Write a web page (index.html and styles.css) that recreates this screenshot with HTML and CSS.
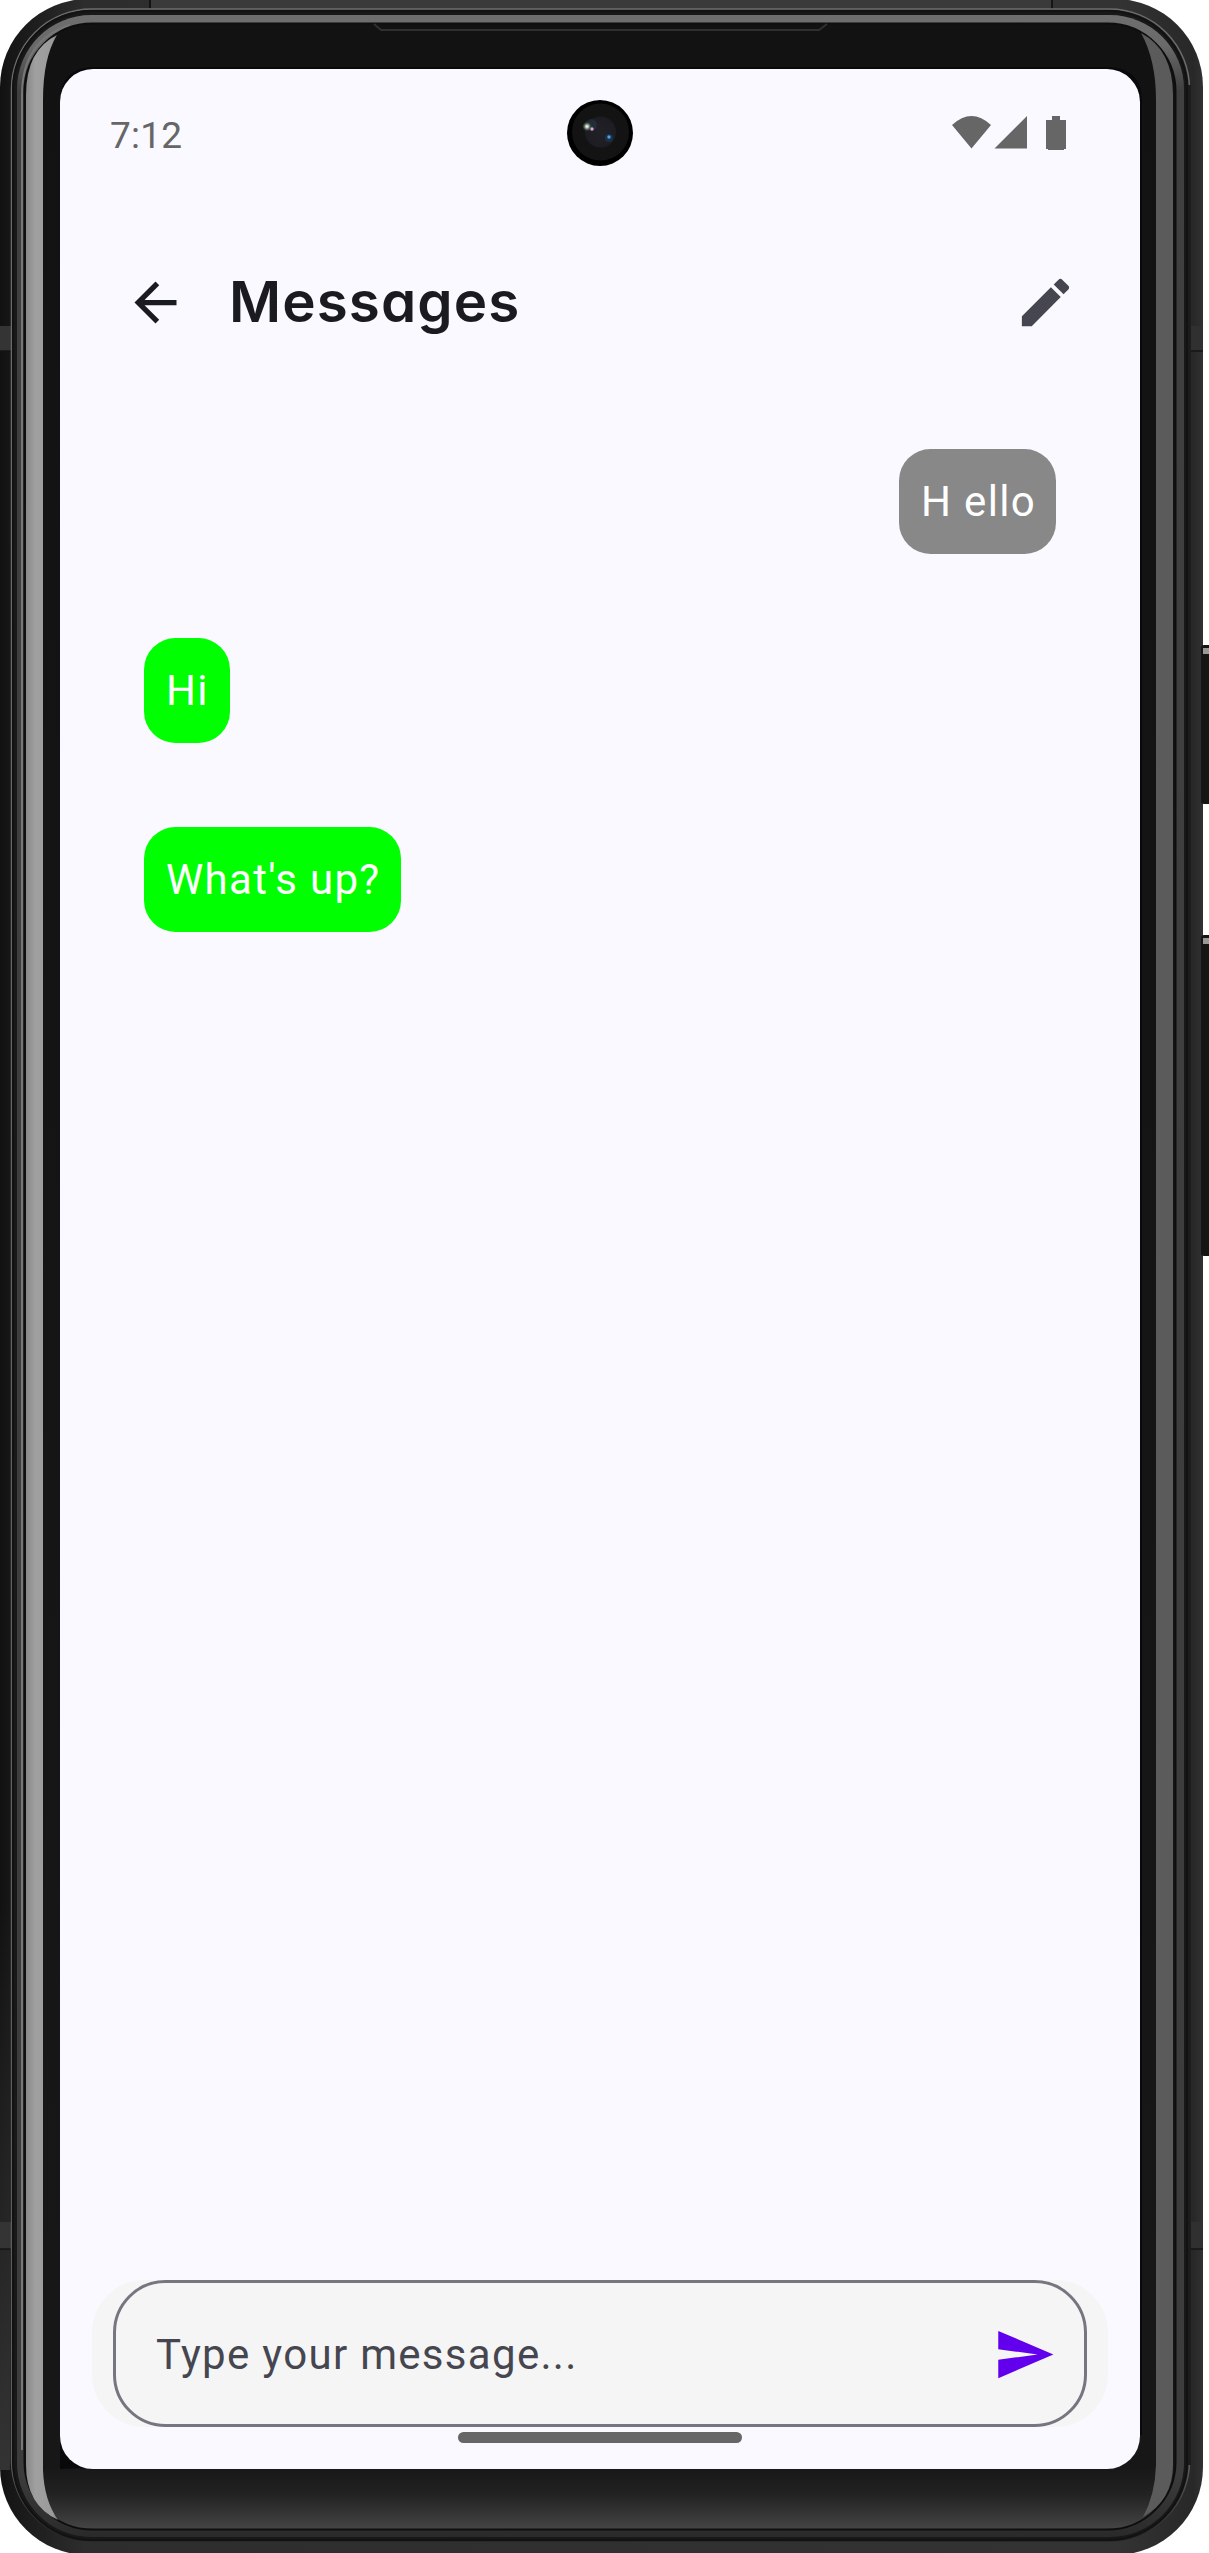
FILE: index.html
```html
<!DOCTYPE html>
<html lang="en">
<head>
<meta charset="utf-8">
<title>Messages</title>
<link rel="stylesheet" href="styles.css">
</head>
<body>
<div class="device">
  <svg class="frame" viewBox="0 0 1209 2553" aria-hidden="true">
    <defs>
      <linearGradient id="side" x1="0" x2="1" y1="0" y2="0">
        <stop offset="0" stop-color="#111"/><stop offset=".008" stop-color="#161616"/>
        <stop offset=".07" stop-color="#2d2d2d"/><stop offset=".93" stop-color="#333"/>
        <stop offset=".992" stop-color="#282828"/><stop offset="1" stop-color="#303030"/>
      </linearGradient>
      <linearGradient id="ring" x1="0" x2="0" y1="0" y2="1">
        <stop offset="0" stop-color="#6e6e6e"/><stop offset=".012" stop-color="#6a6a6a"/>
        <stop offset=".03" stop-color="#404040"/><stop offset=".975" stop-color="#3c3c3c"/>
        <stop offset="1" stop-color="#2a2a2a"/>
      </linearGradient>
      <linearGradient id="rim" x1="0" x2="0" y1="0" y2="1">
        <stop offset="0" stop-color="#6c6c6c"/><stop offset=".97" stop-color="#5c5c5c"/>
        <stop offset="1" stop-color="#262626"/>
      </linearGradient>
      <linearGradient id="glass" x1="0" x2="0" y1="0" y2="1">
        <stop offset="0" stop-color="#121212"/><stop offset=".975" stop-color="#171717"/>
        <stop offset=".986" stop-color="#222"/><stop offset="1" stop-color="#454545"/>
      </linearGradient>
      <linearGradient id="foot" x1="0" x2="0" y1="0" y2="1">
        <stop offset="0" stop-color="#333" stop-opacity="0"/><stop offset="1" stop-color="#333"/>
      </linearGradient>
      <linearGradient id="glintL" x1="0" x2="1" y1="0" y2="0">
        <stop offset="0" stop-color="#888"/><stop offset=".3" stop-color="#a0a0a0"/>
        <stop offset=".85" stop-color="#9a9a9a"/><stop offset="1" stop-color="#707070"/>
      </linearGradient>
      <radialGradient id="lens"><stop offset="0" stop-color="#222027"/><stop offset="1" stop-color="#1c1d22"/></radialGradient>
      <radialGradient id="glow"><stop offset="0" stop-color="#fff"/><stop offset=".3" stop-color="#b8c8b0"/><stop offset="1" stop-color="#304038" stop-opacity="0"/></radialGradient>
    </defs>
    <rect x="0" y="-1" width="1203" height="2556" rx="88" fill="url(#side)"/>
    <path d="M0 1900H10V2470H0Z" fill="url(#foot)"/>
    <path d="M151 0H1052V10H151Z" fill="#3a3a3a"/>
    <path d="M150 0V8M1052 0V10" stroke="#0b0b0b" stroke-width="1.5"/>
    <path d="M0 326H11V351H0ZM0 2222H11V2249H0Z" fill="#343434"/>
    <path d="M1189 326H1203V351H1189ZM1189 2222H1203V2249H1189Z" fill="#303030"/>
    <path d="M0 351H11M1189 351H1203M0 2249H11M1189 2249H1203" stroke="#151515" stroke-width="1.500"/>
    <rect x="1201" y="645" width="10" height="159" rx="3" fill="#151515"/>
    <rect x="1203" y="648" width="6" height="6" fill="#999"/>
    <rect x="1201" y="935" width="10" height="321" rx="3" fill="#151515"/>
    <rect x="1203" y="938" width="6" height="6" fill="#999"/>
    <rect x="11.5" y="9" width="1178" height="2532" rx="80" fill="#202020" stroke="url(#rim)" stroke-width="1.5"/>
    <path d="M1189.500 85V2465" stroke="#1c1c1c" stroke-width="3"/>
    <rect x="13" y="11" width="1174" height="2529" rx="78" fill="#181818" stroke="#121212" stroke-width="2"/>
    <rect x="17" y="15" width="1167" height="2522" rx="74" fill="url(#ring)"/>
    <path d="M22 2450V95Q22 40 70 25" fill="none" stroke="#777" stroke-width="2"/>
    <rect x="24.5" y="23.5" width="1151" height="2506" rx="68" fill="url(#glass)" stroke="#0e0e0e" stroke-width="2"/>
    <path d="M26 95Q26 50 57 35Q43 58 43 100V2470Q44 2500 58 2520Q26 2505 26 2465Z" fill="url(#glintL)"/>
    <path d="M1141 33Q1173 50 1173 95V2465Q1173 2500 1143 2517Q1155 2495 1156 2465V100Q1156 60 1141 33Z" fill="#5b5b5b"/>
    <path d="M374 24L381 30H819L827 24" fill="none" stroke="#303030" stroke-width="2"/>
    <path d="M60 2469V102Q60 67 95 67H1107Q1142 67 1142 102V2435" fill="#09090b"/>
  </svg>
  <main class="screen">
    <header class="status">
      <span class="clock">7:12</span>
      <svg class="status-icons" viewBox="0 0 116 36" aria-hidden="true">
        <path d="M0 9Q19.500-9 39 9L19.500 32.500ZM42.500 32.500L75 0V32.500Z"/>
        <path d="M94 4H100V0H108V4H114V33H112V34H96V33H94Z"/>
      </svg>
      <svg class="camera" viewBox="0 0 66 66" aria-hidden="true">
        <circle cx="33" cy="33" r="33" fill="#000"/><circle cx="33.500" cy="32" r="28.500" fill="#131313"/>
        <circle cx="33.500" cy="32" r="15.500" fill="url(#lens)"/>
        <circle cx="24" cy="25" r="6" fill="#294b5d" opacity=".35"/>
        <circle cx="20" cy="26.500" r="5" fill="url(#glow)"/><circle cx="25" cy="29" r="1.700" fill="#d9a5c9"/>
        <circle cx="42" cy="38" r="4" fill="#164569" opacity=".5"/><circle cx="42" cy="37" r="1.700" fill="#4aa2e8"/>
      </svg>
    </header>
    <div class="toolbar">
      <svg class="icon back" viewBox="0 0 24 24"><path d="M20 11H7.830l5.590-5.590L12 4l-8 8 8 8 1.410-1.410L7.830 13H20v-2z"/></svg>
      <h1 class="title">Messages</h1>
      <svg class="icon edit" viewBox="0 0 24 24"><path d="M3 17.250V21h3.750L17.810 9.940l-3.750-3.750L3 17.250zM20.710 7.040c.39-.39.39-1.020 0-1.410l-2.340-2.340c-.39-.39-1.020-.39-1.410 0l-1.830 1.830 3.750 3.750 1.830-1.830z"/></svg>
    </div>
    <section class="thread">
      <p class="bubble sent">H ello</p>
      <p class="bubble">Hi</p>
      <p class="bubble">What's up?</p>
    </section>
    <footer class="composer">
      <div class="field">
        <span class="hint">Type your message...</span>
        <svg class="icon send" viewBox="0 0 24 24"><path d="M2.010 21L23 12 2.010 3 2 10l15 2-15 2z"/></svg>
      </div>
    </footer>
    <div class="home"></div>
  </main>
</div>
</body>
</html>
```
FILE: styles.css
```css
* { box-sizing: border-box; }
body { margin: 0; background: #fff; font-family: Roboto, "Liberation Sans", sans-serif; }
.device { position: relative; width: 1209px; height: 2553px; padding: 69px 69px 84px 60px; overflow: hidden; }
.frame { position: absolute; inset: 0; width: 1209px; height: 2553px; }
.screen { position: relative; display: flex; flex-direction: column; width: 1080px; height: 2400px; border-radius: 33px; background: #f9f9ff; overflow: hidden; }
.status { display: flex; justify-content: space-between; align-items: center; height: 134px; padding: 0 72px 0 50px; }
.clock { font-size: 37px; line-height: 44px; letter-spacing: 0.2px; color: #666; }
.status-icons { width: 116px; height: 36px; fill: #666; margin-top: -4px; }
.camera { position: absolute; left: 507px; top: 31px; width: 66px; height: 66px; }
.toolbar { display: flex; align-items: center; height: 198px; padding: 0 63px 0 64px; }
.icon { width: 63px; height: 63px; flex: none; }
.back { fill: #1a1b21; }
.edit { fill: #45464f; margin-left: auto; }
.title { margin: 0 0 0 42px; font: 600 56.5px/76px Inter, sans-serif; font-feature-settings: "cv11"; letter-spacing: 1.1px; color: #1a1b21; }
.thread { flex: 1; display: flex; flex-direction: column; align-items: flex-start; gap: 84px; padding: 48px 84px 0; }
.bubble { margin: 0; padding: 21px 21px 21px 22px; border-radius: 31.5px; background: #0f0; color: #fff; font-size: 42px; line-height: 63px; letter-spacing: 1.31px; }
.sent { align-self: flex-end; padding-right: 20px; background: #888; }
.composer { margin: 0 32px; padding: 0 21px; height: 147px; border-radius: 52.5px; background: #f5f5f5; }
.field { display: flex; align-items: center; justify-content: space-between; height: 147px; padding: 2px 28px 0 40px; border: 3px solid #767680; border-radius: 52.5px; }
.hint { font-size: 42px; line-height: 63px; letter-spacing: 1.31px; color: #45464f; }
.send { fill: #6200ee; }
.home { align-self: center; width: 284px; height: 11px; margin: 5px 0 26px; border-radius: 6px; background: #666; }
```
